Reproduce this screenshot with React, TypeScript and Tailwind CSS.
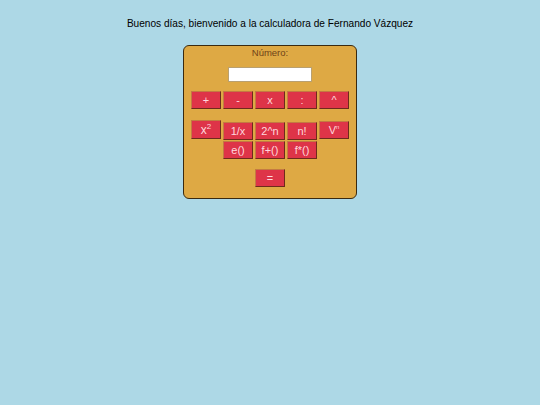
import React from "react";

const btn =
  "w-[30px] h-[18px] bg-[#de3448] border border-t-[#c47a42] border-l-[#c47a42] border-b-[#6e2a1c] border-r-[#6e2a1c] text-[11px] leading-none text-[#ffd8de] flex items-center justify-center";

function Btn({ children, className = "" }: { children: React.ReactNode; className?: string }) {
  return <div className={`${btn} ${className}`}>{children}</div>;
}

export default function App() {
  return (
    <div
      className="w-[540px] h-[405px] bg-[#add8e6] flex flex-col items-center"
      style={{ fontFamily: '"Liberation Sans", Arial, sans-serif' }}
    >
      <div className="mt-[17px] h-[13px] leading-[13px] text-[10.1px] text-black">
        Buenos días, bienvenido a la calculadora de Fernando Vázquez
      </div>
      <div className="mt-[15px] w-[174px] h-[154px] bg-[#dea944] border border-[#3a2a10] rounded-[6px] flex flex-col items-center">
        <div className="mt-[1px] h-[12px] leading-[12px] text-[9.5px] text-[#6e4318]">Número:</div>
        <div className="mt-[8px] w-[84px] h-[15px] bg-white border border-[#b9a070]" />
        <div className="mt-[9px] flex gap-[2px]">
          <Btn>+</Btn>
          <Btn>-</Btn>
          <Btn>x</Btn>
          <Btn>:</Btn>
          <Btn>^</Btn>
        </div>
        <div className="mt-[11px] flex gap-[2px] items-start">
          <Btn className="h-[19px] text-[12px]">
            x<sup className="text-[8px] relative -top-[3px]">2</sup>
          </Btn>
          <div className="mt-[2px] grid grid-cols-3 gap-x-[2px] gap-y-[1px]">
            <Btn>1/x</Btn>
            <Btn>2^n</Btn>
            <Btn>n!</Btn>
            <Btn>e()</Btn>
            <Btn>f+()</Btn>
            <Btn>f*()</Btn>
          </div>
          <Btn className="mt-[1px]">
            V<sup className="text-[6px] relative -top-[3px]">n</sup>
          </Btn>
        </div>
        <div className="mt-[10px]">
          <Btn>=</Btn>
        </div>
      </div>
    </div>
  );
}
